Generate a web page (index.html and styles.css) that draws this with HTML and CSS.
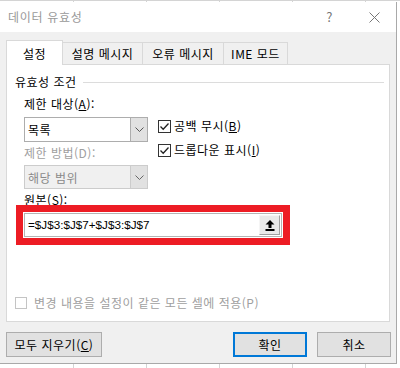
FILE: index.html
```html
<!DOCTYPE html>
<html lang="ko">
<head>
<meta charset="utf-8">
<link rel="stylesheet" href="styles.css">
</head>
<body>
<div class="win">
  <div class="titlebar">
    <span class="title">데이터 유효성</span>
    <span class="help">?</span>
    <svg class="close" width="11" height="11" viewBox="0 0 11 11"><path d="M0.5 0.5 L10.5 10.5 M10.5 0.5 L0.5 10.5" stroke="#777" stroke-width="1" fill="none"/></svg>
  </div>
  <div class="body">
    <div class="tabs">
      <div class="tab active t1">설정</div>
      <div class="tab t2">설명 메시지</div>
      <div class="tab t3">오류 메시지</div>
      <div class="tab t4">IME 모드</div>
    </div>
    <div class="panel">
      <div class="group-title"><span>유효성 조건</span><span class="gline"></span></div>
      <div class="group">
        <div class="row">
          <div class="lcol">
            <div class="lbl">제한 대상(<u>A</u>):</div>
            <div class="select sel1">
              <span class="sel-text">목록</span>
              <span class="sel-btn"><svg width="9" height="5" viewBox="0 0 9 5"><path d="M0.5 0.5 L4.5 4.5 L8.5 0.5" stroke="#555" stroke-width="1" fill="none"/></svg></span>
            </div>
            <div class="lbl dis lbl2">제한 방법(D):</div>
            <div class="select disabled sel2">
              <span class="sel-text">해당 범위</span>
              <span class="sel-btn"><svg width="9" height="5" viewBox="0 0 9 5"><path d="M0.5 0.5 L4.5 4.5 L8.5 0.5" stroke="#666" stroke-width="1" fill="none"/></svg></span>
            </div>
          </div>
          <div class="rcol">
            <div class="chk">
              <span class="box"><svg width="11" height="11" viewBox="0 0 11 11"><path d="M1.5 5.5 L4.2 8.3 L9.5 2.5" stroke="#222" stroke-width="1.3" fill="none"/></svg></span>
              <span>공백 무시(<u>B</u>)</span>
            </div>
            <div class="chk">
              <span class="box"><svg width="11" height="11" viewBox="0 0 11 11"><path d="M1.5 5.5 L4.2 8.3 L9.5 2.5" stroke="#222" stroke-width="1.3" fill="none"/></svg></span>
              <span>드롭다운 표시(<u>I</u>)</span>
            </div>
          </div>
        </div>
        <div class="lbl lbl3">원본(<u>S</u>):</div>
      </div>
      <div class="redbox">
        <div class="input">
          <span class="formula">=$J$3:$J$7+$J$3:$J$7</span>
          <span class="upbtn"><svg width="10" height="11" viewBox="0 0 10 11"><path d="M5 0 L9.5 4.5 L6.5 4.5 L6.5 8 L3.5 8 L3.5 4.5 L0.5 4.5 Z" fill="#000"/><rect x="0.5" y="9" width="9" height="2" fill="#000"/></svg></span>
        </div>
      </div>
      <div class="chk apply">
        <span class="box dbox"></span>
        <span>변경 내용을 설정이 같은 모든 셀에 적용(P)</span>
      </div>
    </div>
    <div class="buttons">
      <div class="btn clear">모두 지우기(<u>C</u>)</div>
      <div class="btn ok">확인</div>
      <div class="btn cancel">취소</div>
    </div>
  </div>
</div>
</body>
</html>
```
FILE: styles.css
```css
html, body {
  margin: 0;
  padding: 0;
}
body {
  width: 400px;
  height: 368px;
  overflow: hidden;
  font-family: "Noto Sans CJK KR", "Noto Sans", sans-serif;
  font-size: 12px;
  letter-spacing: 0.5px;
  color: #000;
  background-color: #fff;
  background-image:
    linear-gradient(to bottom, #d4d4d4 0, #d4d4d4 1px, transparent 1px),
    repeating-linear-gradient(to right, transparent 0, transparent 72px, #d4d4d4 72px, #d4d4d4 73px);
  background-position: 0 0, 1px 0;
}
u { text-decoration: underline; text-underline-offset: 1px; }

.win {
  margin-top: 2px;
  width: 397px;
  height: 362px;
  box-sizing: border-box;
  border-right: 1px solid #a9a9a9;
  border-bottom: 1px solid #a9a9a9;
  display: flex;
  flex-direction: column;
}
.titlebar {
  height: 30px;
  flex: none;
  background: #fff;
  display: flex;
  align-items: center;
  padding-left: 8px;
  padding-right: 16px;
}
.title {
  flex: 1;
  color: #999;
  font-size: 12px;
  line-height: 16px;
  letter-spacing: 0.7px;
}
.help {
  color: #777;
  font-size: 13px;
  line-height: 16px;
  margin-right: 36px;
}
.close { display: block; }

.body {
  flex: 1;
  background: #f0f0f0;
  padding-top: 8px;
}
.tabs {
  display: flex;
  align-items: flex-end;
  height: 24px;
  margin-left: 6px;
}
.tab {
  box-sizing: border-box;
  height: 22px;
  border: 1px solid #d9d9d9;
  border-bottom: none;
  margin-left: -1px;
  display: flex;
  align-items: center;
  justify-content: center;
  line-height: 16px;
  background: #f0f0f0;
}
.tab.active {
  margin-left: 0;
  height: 25px;
  margin-bottom: -1px;
  background: #fff;
  position: relative;
  z-index: 1;
  padding-top: 1px;
}
.t1 { width: 57px; }
.t2 { width: 81px; }
.t3 { width: 82px; }
.t4 { width: 65px; }

.panel {
  box-sizing: border-box;
  margin-left: 6px;
  width: 384px;
  height: 258px;
  background: #fff;
  border: 1px solid #d9d9d9;
  padding: 9px 0 0 8px;
}
.group-title {
  display: flex;
  align-items: center;
  height: 16px;
  line-height: 16px;
}
.gline {
  flex: 1;
  height: 1px;
  background: #dcdcdc;
  margin-left: 6px;
  margin-right: 5px;
}
.group {
  margin-left: 9px;
  margin-top: 6px;
}
.row {
  display: flex;
}
.lcol {
  width: 124px;
}
.lbl {
  line-height: 16px;
  height: 16px;
}
.dis { color: #a0a0a0; }
.lbl2 { margin-top: 3px; }
.lbl3 { margin-top: 3px; height: 13px; }

.select {
  box-sizing: border-box;
  display: flex;
  height: 25px;
  border: 1px solid #adadad;
  background: #fff;
  margin-top: 5px;
}
.select.disabled {
  height: 24px;
  margin-top: 4px;
  background: #f0f0f0;
  border-color: #cccccc;
  color: #8a8a8a;
}
.sel-text {
  flex: 1;
  padding-left: 3px;
  line-height: 23px;
}
.sel-btn {
  width: 16px;
  border-left: 1px solid #adadad;
  background: #e1e1e1;
  display: flex;
  align-items: center;
  justify-content: center;
}
.select.disabled .sel-btn {
  border-left-color: #cccccc;
  background: #e1e1e1;
}
.rcol {
  margin-left: 10px;
  padding-top: 22px;
  display: flex;
  flex-direction: column;
  gap: 8px;
}
.chk {
  display: flex;
  align-items: center;
  height: 16px;
  line-height: 16px;
}
.box {
  box-sizing: border-box;
  width: 13px;
  height: 13px;
  border: 1px solid #333;
  background: #fff;
  margin-right: 3px;
  display: flex;
  align-items: center;
  justify-content: center;
}

.redbox {
  position: relative;
  box-sizing: border-box;
  width: 274px;
  margin-left: 1px;
  border: 7px solid #ed1c24;
  padding: 1px;
  background: #fff;
}
.input {
  box-sizing: border-box;
  height: 24px;
  border: 1px solid #b4b4b4;
  display: flex;
  align-items: center;
  padding: 0 1px 0 3px;
}
.formula {
  flex: 1;
  line-height: 16px;
  font-family: "Liberation Sans", Arial, sans-serif;
  font-size: 11.7px;
  letter-spacing: 0;
}
.upbtn {
  box-sizing: border-box;
  width: 21px;
  height: 20px;
  background: #e9e9e9;
  border: 1px solid #f5f5f5;
  border-right-color: #a0a0a0;
  border-bottom-color: #a0a0a0;
  display: flex;
  align-items: center;
  justify-content: center;
}

.apply {
  margin-top: 50px;
  color: #a0a0a0;
}
.apply .box {
  width: 12px;
  height: 12px;
  border-color: #c4c4c4;
  margin-right: 7px;
}

.buttons {
  display: flex;
  margin-top: 10px;
  padding-left: 6px;
}
.btn {
  box-sizing: border-box;
  height: 25px;
  border: 1px solid #adadad;
  background: #e1e1e1;
  display: flex;
  align-items: center;
  justify-content: center;
  line-height: 16px;
}
.clear { width: 96px; }
.ok {
  width: 74px;
  margin-left: auto;
  border: 2px solid #0078d7;
}
.cancel {
  width: 74px;
  margin-left: 10px;
  margin-right: 5px;
}
```
